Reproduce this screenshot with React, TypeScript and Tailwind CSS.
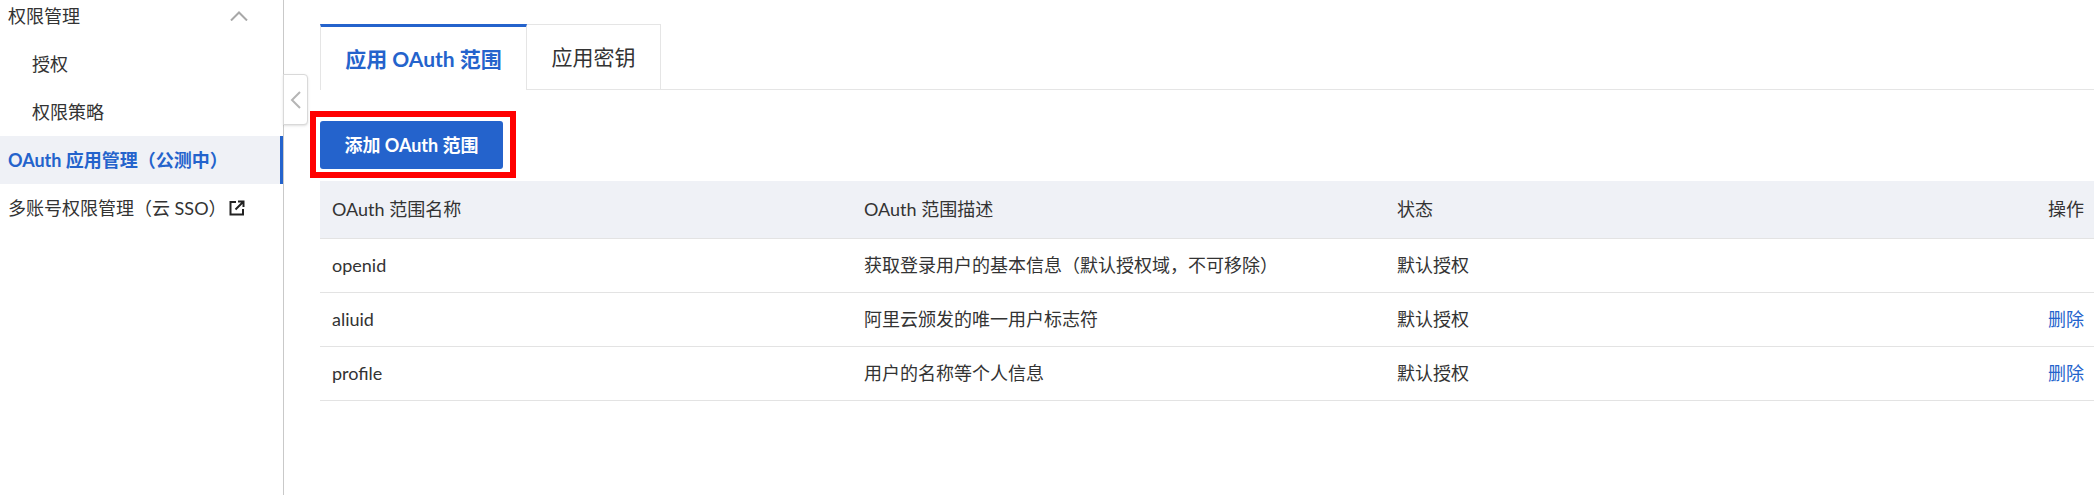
const rows = [
  { name: "openid", desc: "获取登录用户的基本信息（默认授权域，不可移除）", removable: false },
  { name: "aliuid", desc: "阿里云颁发的唯一用户标志符", removable: true },
  { name: "profile", desc: "用户的名称等个人信息", removable: true },
];

function ExternalIcon() {
  return (
    <svg width="16" height="16" viewBox="0 0 16 16" fill="none" stroke="#222" strokeWidth="2" className="ml-[2px]">
      <path d="M7 2H1.5v12.5H14V9" />
      <path d="M6.5 9.5L14 2M9 1.5h5.5V7" />
    </svg>
  );
}

function Sidebar() {
  return (
    <aside className="relative w-[284px] shrink-0 border-r border-[#c9c9c9] bg-white">
      <nav className="-mt-2 text-[18px] text-[#333]">
        <div className="flex h-12 items-center justify-between pl-2 pr-[35px]">
          <span>权限管理</span>
          <svg width="18" height="10" viewBox="0 0 18 10" fill="none" stroke="#a8a8a8" strokeWidth="2">
            <path d="M1 9.5L9 1.5L17 9.5" />
          </svg>
        </div>
        <div className="flex h-12 items-center pl-8">授权</div>
        <div className="flex h-12 items-center pl-8">权限策略</div>
        <div className="flex h-12 items-center border-r-[3px] border-[#2463cc] bg-[#eff1f6] pl-2 font-bold text-[#2463cc]">
          OAuth 应用管理（公测中）
        </div>
        <div className="flex h-12 items-center pl-2">
          多账号权限管理（云 SSO）
          <ExternalIcon />
        </div>
      </nav>
      <button className="absolute left-[283px] top-[74px] flex h-[51px] w-[25px] items-center justify-center rounded-r border border-[#d9d9d9] bg-white shadow-sm">
        <svg width="11" height="18" viewBox="0 0 11 18" fill="none" stroke="#b5b5b5" strokeWidth="2">
          <path d="M10 1L2 9L10 17" />
        </svg>
      </button>
    </aside>
  );
}

export default function App() {
  return (
    <div className="flex h-[495px] w-[2094px] overflow-hidden bg-white font-['Lato','Noto_Sans_CJK_SC',sans-serif] text-[18px] text-[#333]">
      <Sidebar />
      <main className="flex-1 pl-9 pt-6">
        <div className="flex h-[66px] border-b border-[#e5e5e5]">
          <div className="flex h-[66px] w-[207px] items-center justify-center border-x border-[#e5e5e5] border-t-[3px] border-t-[#2463cc] bg-white text-[21px] font-bold text-[#2463cc]">
            应用 OAuth 范围
          </div>
          <div className="flex h-[66px] w-[134px] items-center justify-center border border-l-0 border-[#e5e5e5] text-[21px]">
            应用密钥
          </div>
        </div>
        <div className="relative mt-[31px]">
          <button className="h-12 w-[183px] rounded-[3px] bg-[#2463cc] text-[18px] font-bold text-white">
            添加 OAuth 范围
          </button>
          <div className="pointer-events-none absolute -left-[10px] -top-[10px] h-[67px] w-[206px] border-[6px] border-[#ff0000]" />
        </div>
        <table className="mt-3 w-full table-fixed border-collapse text-left">
          <thead>
            <tr className="h-[57px] border-b border-[#e3e3e3] bg-[#eff1f6]">
              <th className="w-[532px] pl-3 font-normal">OAuth 范围名称</th>
              <th className="w-[533px] pl-3 font-normal">OAuth 范围描述</th>
              <th className="pl-3 font-normal">状态</th>
              <th className="w-[120px] pr-[10px] text-right font-normal">操作</th>
            </tr>
          </thead>
          <tbody>
            {rows.map((row) => (
              <tr key={row.name} className="h-[54px] border-b border-[#e3e3e3]">
                <td className="pl-3">{row.name}</td>
                <td className="pl-3">{row.desc}</td>
                <td className="pl-3">默认授权</td>
                <td className="pr-[10px] text-right text-[#2463cc]">{row.removable && "删除"}</td>
              </tr>
            ))}
          </tbody>
        </table>
      </main>
    </div>
  );
}
